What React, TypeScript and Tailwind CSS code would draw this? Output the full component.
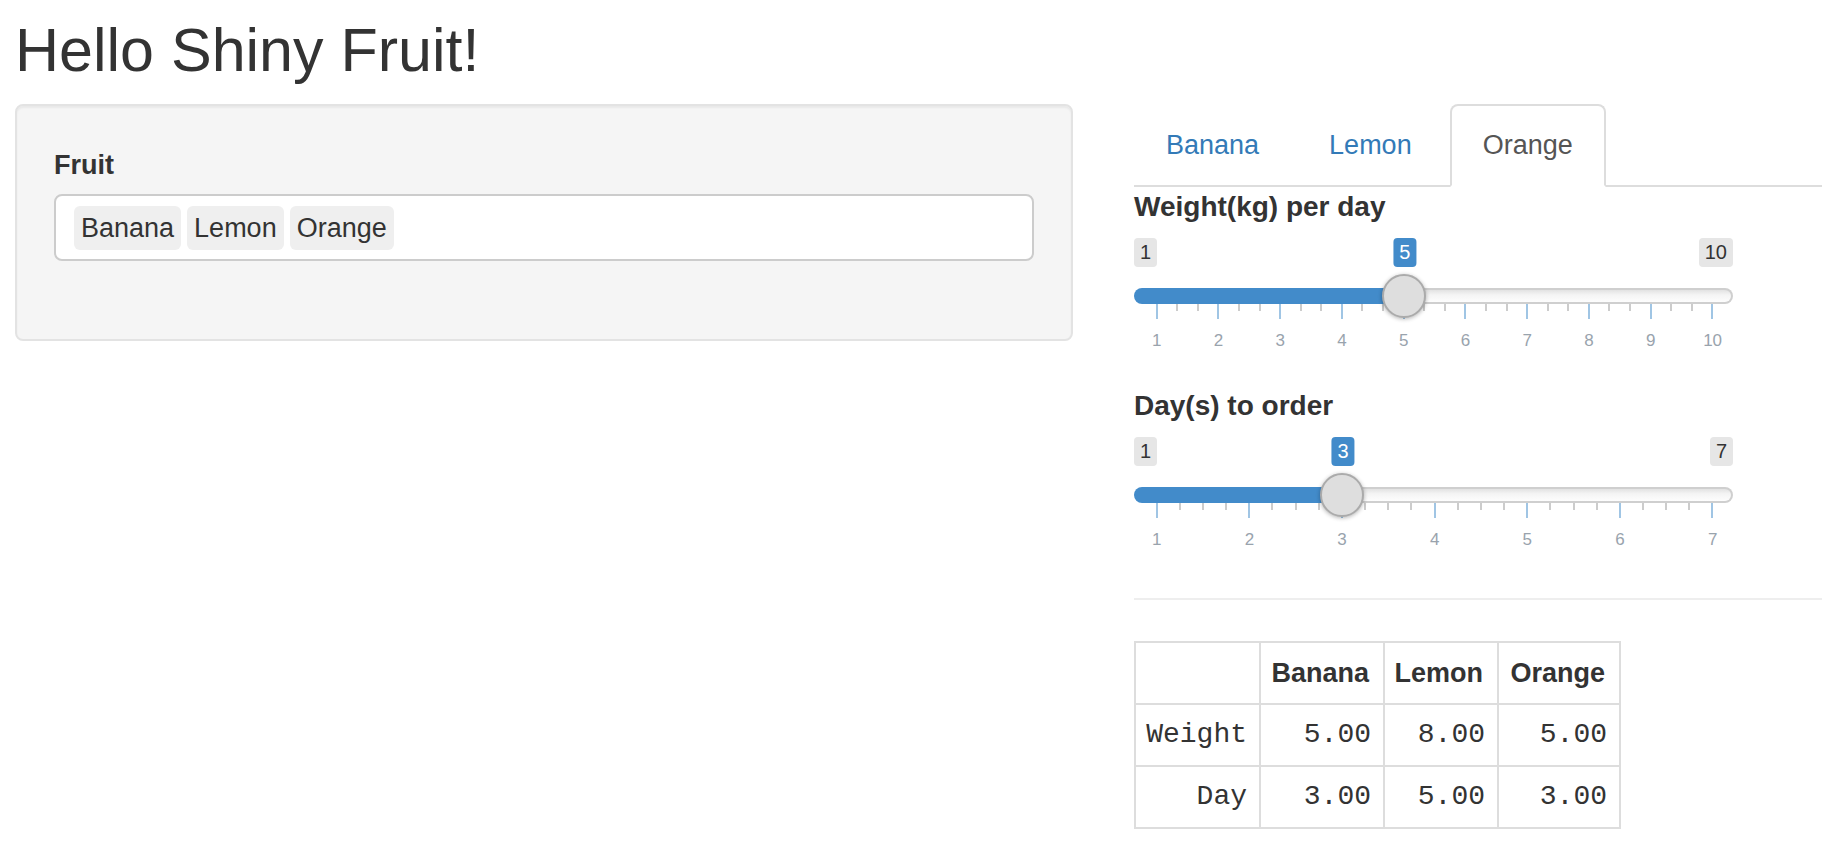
import React from "react";

type SliderProps = { min: number; max: number; value: number; sub: number };

function Slider({ min, max, value, sub }: SliderProps) {
  const L = 22.7;
  const S = 556;
  const x = (v: number) => L + ((v - min) / (max - min)) * S;
  const majors: number[] = [];
  for (let v = min; v <= max; v++) majors.push(v);
  const ticks: { major: boolean; key: string }[] = [];
  for (let v = min; v <= max; v++) {
    ticks.push({ major: true, key: "M" + v });
    if (v < max) for (let k = 1; k <= sub; k++) ticks.push({ major: false, key: "m" + v + "-" + k });
  }
  const cell = S / (max - min);
  return (
    <div className="flex w-[599px] flex-col">
      <div className="relative mt-[2px] flex h-[29px] justify-between">
        <span className="rounded-[4px] bg-[#e6e6e6] px-[6px] text-[20px] leading-[29px] text-[#333]">{min}</span>
        <span
          className="absolute top-0 -translate-x-1/2 rounded-[4px] bg-[#428bca] px-[6px] text-[20px] leading-[29px] text-white"
          style={{ left: x(value) + 1 }}
        >
          {value}
        </span>
        <span className="rounded-[4px] bg-[#e6e6e6] px-[6px] text-[20px] leading-[29px] text-[#333]">{max}</span>
      </div>
      <div className="relative mt-[21px] flex h-[16px]">
        <div className="h-full shrink-0 rounded-l-full bg-[#428bca]" style={{ width: x(value) }} />
        <div className="h-full flex-1 rounded-r-full border-2 border-l-0 border-[#cfcfcf] bg-[linear-gradient(to_bottom,#e2e2e2,#f4f4f4_40%,#fdfdfd)]" />
        <div
          className="absolute top-1/2 z-10 h-[44px] w-[44px] -translate-x-1/2 -translate-y-1/2 rounded-full border-2 border-[#ababab] bg-[#dedede] shadow-[0_1px_4px_rgba(0,0,0,0.3)]"
          style={{ left: x(value) }}
        />
      </div>
      <div className="-mt-[1px] ml-[21.7px] flex h-[16px] w-[558px] items-start justify-between">
        {ticks.map((t) => (
          <div
            key={t.key}
            className={t.major ? "h-[16px] w-[2px] bg-[#a0c5e4]" : "h-[8px] w-[2px] bg-[#cccccc]"}
          />
        ))}
      </div>
      <div
        className="mt-[13px] grid"
        style={{ gridTemplateColumns: `repeat(${majors.length}, ${cell}px)`, marginLeft: L - cell / 2 }}
      >
        {majors.map((m) => (
          <span key={m} className="text-center text-[17px] leading-[17px] text-[#99a3ad]">
            {m}
          </span>
        ))}
      </div>
    </div>
  );
}

export default function App() {
  const tabs = ["Banana", "Lemon", "Orange"];
  const active = "Orange";
  const rows = [
    ["Weight", "5.00", "8.00", "5.00"],
    ["Day", "3.00", "5.00", "3.00"],
  ];
  return (
    <div className="min-h-screen w-full bg-white font-['Liberation_Sans',Arial,sans-serif] text-[#333]">
      <div className="px-[15px]">
        <h2 className="mb-[20px] pt-[17px] text-[61px] font-normal leading-[1.1]">Hello Shiny Fruit!</h2>
      </div>
      <div className="flex items-start gap-[61px] pl-[15px]">
        <div className="w-[1058px] shrink-0 rounded-[8px] border-2 border-[#e3e3e3] bg-[#f5f5f5] px-[37px] pb-[78px] pt-[40px] shadow-[inset_0_2px_2px_rgba(0,0,0,0.05)]">
          <div className="mb-[10px] text-[27px] font-bold leading-[38px]">Fruit</div>
          <div className="flex h-[67px] items-start gap-[6px] rounded-[8px] border-2 border-[#cccccc] bg-white pl-[18px] pt-[10px]">
            {tabs.map((t) => (
              <span key={t} className="h-[44px] rounded-[6px] bg-[#efefef] px-[7px] text-[27px] leading-[44px] text-[#333]">
                {t}
              </span>
            ))}
          </div>
        </div>
        <div className="flex min-w-0 flex-1 flex-col">
          <div className="flex gap-[6px] border-b-2 border-[#dddddd]">
            {tabs.map((t) => (
              <div
                key={t}
                className={
                  t === active
                    ? "-mb-[2px] flex h-[83px] items-center rounded-t-[8px] border-2 border-[#dddddd] border-b-white bg-white px-[31px] text-[27px] text-[#555]"
                    : "-mb-[2px] flex h-[83px] items-center rounded-t-[8px] border-2 border-transparent px-[30px] text-[27px] text-[#337ab7]"
                }
              >
                {t}
              </div>
            ))}
          </div>
          <div className="mt-[1px] flex flex-col gap-[10px]">
            <div className="text-[28px] font-bold leading-[38px]">Weight(kg) per day</div>
            <Slider min={1} max={10} value={5} sub={2} />
          </div>
          <div className="mt-[38px] flex flex-col gap-[10px]">
            <div className="text-[28px] font-bold leading-[38px]">Day(s) to order</div>
            <Slider min={1} max={7} value={3} sub={3} />
          </div>
          <div className="mt-[50px] h-[2px] bg-[#eeeeee]" />
          <table className="mt-[41px] w-[485px] table-fixed border-collapse border-2 border-[#dddddd]">
            <thead>
              <tr>
                <th className="h-[62px] w-[125px] border-2 border-[#dddddd]" />
                <th className="h-[62px] w-[124px] border-2 border-[#dddddd] pr-[14px] text-right text-[27px] font-bold">Banana</th>
                <th className="h-[62px] w-[114px] border-2 border-[#dddddd] pr-[14px] text-right text-[27px] font-bold">Lemon</th>
                <th className="h-[62px] w-[122px] border-2 border-[#dddddd] pr-[14px] text-right text-[27px] font-bold">Orange</th>
              </tr>
            </thead>
            <tbody>
              {rows.map((r) => (
                <tr key={r[0]}>
                  {r.map((c, i) => (
                    <td
                      key={i}
                      className="h-[62px] border-2 border-[#dddddd] pr-[12px] text-right font-['Liberation_Mono','Courier_New',monospace] text-[28px] text-[#333]"
                    >
                      {c}
                    </td>
                  ))}
                </tr>
              ))}
            </tbody>
          </table>
        </div>
      </div>
    </div>
  );
}
